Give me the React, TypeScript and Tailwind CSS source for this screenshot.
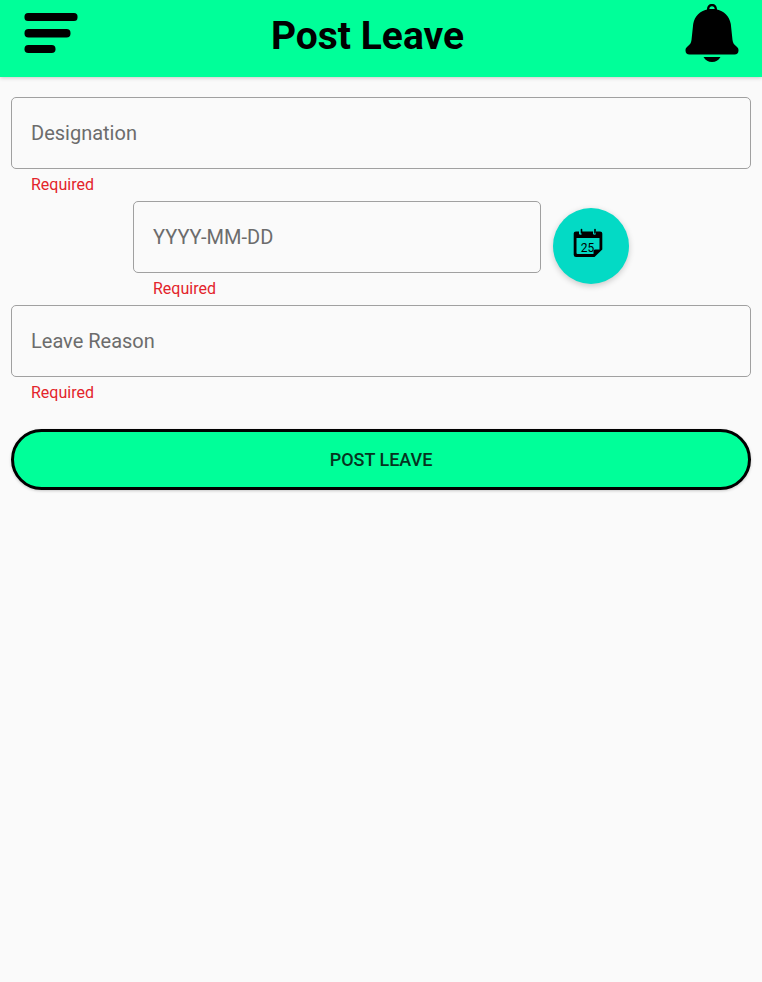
import { useId } from "react";

function Field({ label, className = "" }: { label: string; className?: string }) {
  const id = useId();
  return (
    <div className={className}>
      <div className="relative">
        <input
          id={id}
          type="text"
          placeholder=" "
          aria-describedby={`${id}-error`}
          className="peer block h-[72px] w-full rounded-[5px] border border-[#a0a0a0] bg-transparent px-5 text-xl text-black"
        />
        <label
          htmlFor={id}
          className="pointer-events-none absolute inset-0 hidden items-center px-5 text-xl text-[#6c6c6c] peer-placeholder-shown:flex"
        >
          {label}
        </label>
      </div>
      <p id={`${id}-error`} className="h-8 px-5 pt-1 text-base leading-6 text-[#e3242b]">
        Required
      </p>
    </div>
  );
}

function MenuIcon() {
  return (
    <svg viewBox="0 0 54 40" className="h-10 w-[54px]" fill="currentColor" aria-hidden="true">
      <rect x="0.5" y="0" width="53" height="8" rx="3.5" />
      <rect x="0.5" y="16" width="46" height="8.5" rx="4" />
      <rect x="0.5" y="32" width="31" height="8" rx="3.8" />
    </svg>
  );
}

function BellIcon() {
  return (
    <svg viewBox="0 0 54 58" className="h-[58px] w-[54px]" fill="currentColor" aria-hidden="true">
      <path
        fillRule="evenodd"
        d="M22 5.500C22 2 23.800 0 27 0s5 2 5 5.500C38.500 6.800 44.500 12 45.800 20L47.500 36c.4 3 1.500 4.500 4 6.500 1.500 1.200 2 2.300 2 4 0 2.500-1.500 4-4 4h-45c-2.500 0-4-1.500-4-4 0-1.700.5-2.800 2-4 2.500-2 3.600-3.500 4-6.500L8.200 20C9.500 12 15.500 6.800 22 5.500ZM24.300 5h5.400C29.500 3.200 28.600 2.300 27 2.300S24.500 3.200 24.300 5Z"
      />
      <path d="M18.500 53h17c-2 3.500-4.800 5-8.500 5s-6.500-1.500-8.500-5Z" />
    </svg>
  );
}

function CalendarIcon() {
  return (
    <svg viewBox="0 0 30 30" className="h-[30px] w-[30px]" aria-hidden="true">
      <path
        fill="currentColor"
        fillRule="evenodd"
        d="M3 3.500h3V6a1.800 1.800 0 0 0 3 0V3.500h11V6a1.800 1.800 0 0 0 3 0V3.500h4A2.300 2.300 0 0 1 29.300 6v15.500L21.500 29H3A2.300 2.300 0 0 1 .700 26.700V6A2.300 2.300 0 0 1 3 3.500ZM3.500 10v15a1 1 0 0 0 1 1H20.500v-3a1.500 1.500 0 0 1 1.500-1.500h4.500V10Z"
      />
      <path stroke="currentColor" strokeWidth="1.600" strokeLinecap="round" d="M8.500 1.500v3.500M22 1.500v3.500" />
      <text
        x="14.500"
        y="23.500"
        textAnchor="middle"
        fill="currentColor"
        className="font-[Roboto,sans-serif] text-[12px]"
      >
        25
      </text>
    </svg>
  );
}

export default function App() {
  return (
    <div className="min-h-screen bg-[#fafafa] font-[Roboto,sans-serif] text-black">
      <header className="flex h-[77px] items-start justify-between bg-[#00ff99] pr-[23px] pl-6 shadow-[0_1px_4px_rgba(0,0,0,0.2)]">
        <button type="button" aria-label="Open menu" className="mt-[13px]">
          <MenuIcon />
        </button>
        <h1 className="pt-3 pr-7 text-[39px] leading-12 font-bold">Post Leave</h1>
        <button type="button" aria-label="Notifications" className="mt-1">
          <BellIcon />
        </button>
      </header>

      <form className="px-[11px] pt-5" onSubmit={(event) => event.preventDefault()}>
        <Field label="Designation" />
        <div className="flex items-start justify-center gap-3">
          <Field label="YYYY-MM-DD" className="w-[408px]" />
          <button
            type="button"
            aria-label="Pick a date"
            className="mt-[7px] flex size-[76px] items-center justify-center rounded-full bg-[#03dac5] pr-1.5 pb-1.5 shadow-[0_2px_6px_rgba(0,0,0,0.2)]"
          >
            <CalendarIcon />
          </button>
        </div>
        <Field label="Leave Reason" />
        <button
          type="submit"
          className="mt-5 h-[61px] w-full rounded-full border-3 border-black bg-[#00ff99] text-lg font-medium text-[#06331f] shadow-[0_1px_3px_rgba(0,0,0,0.2)]"
        >
          POST LEAVE
        </button>
      </form>
    </div>
  );
}
